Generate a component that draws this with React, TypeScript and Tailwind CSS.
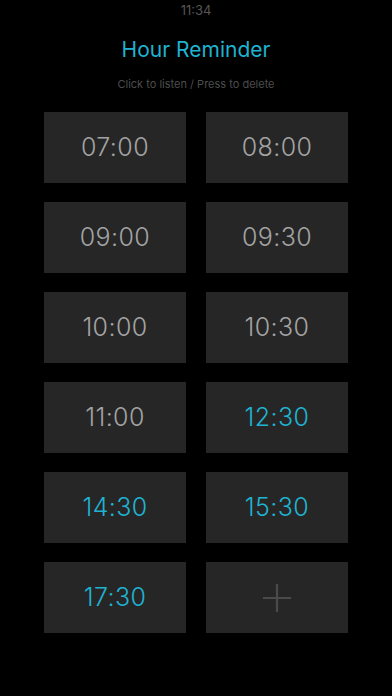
const times: { label: string; active: boolean }[] = [
  { label: "07:00", active: false },
  { label: "08:00", active: false },
  { label: "09:00", active: false },
  { label: "09:30", active: false },
  { label: "10:00", active: false },
  { label: "10:30", active: false },
  { label: "11:00", active: false },
  { label: "12:30", active: true },
  { label: "14:30", active: true },
  { label: "15:30", active: true },
  { label: "17:30", active: true },
];

export default function App() {
  return (
    <div
      className="w-[392px] h-[696px] bg-black overflow-hidden flex flex-col items-center"
      style={{ fontFamily: "Inter, 'Noto Sans', sans-serif" }}
    >
      <div className="h-[21px] pt-[2px] text-[13px] leading-[17px] text-[#555555]">
        11:34
      </div>
      <h1 className="mt-[16px] text-[21px] leading-[26px] text-[#1fb3d1] font-normal">
        Hour Reminder
      </h1>
      <p className="mt-[14px] text-[11px] leading-[14px] text-[#4d4d4d]">
        Click to listen / Press to delete
      </p>
      <div className="mt-[21px] grid grid-cols-[142px_142px] gap-x-[20px] gap-y-[19px]">
        {times.map((t) => (
          <button
            key={t.label}
            className={
              "h-[71px] bg-[#262626] flex items-center justify-center text-[25px] font-light tracking-[0.4px] " +
              (t.active ? "text-[#1fb3d1]" : "text-[#a3a3a3]")
            }
          >
            {t.label}
          </button>
        ))}
        <button className="h-[71px] bg-[#262626] flex items-center justify-center">
          <svg width="30" height="30" viewBox="0 0 30 30">
            <path d="M15 1 V29 M1 15 H29" stroke="#4a4a4a" strokeWidth="2.2" />
          </svg>
        </button>
      </div>
    </div>
  );
}
